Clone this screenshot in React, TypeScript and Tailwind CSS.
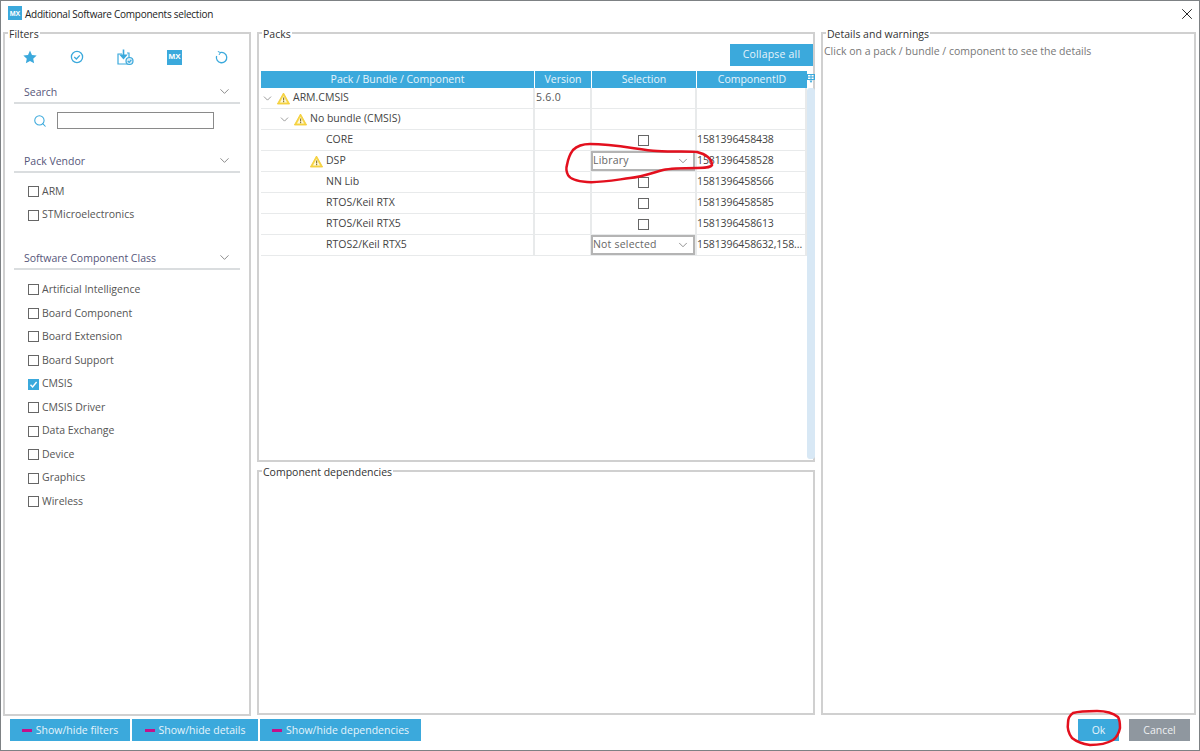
import React from 'react';
import { ChevronDown, Search, X } from 'lucide-react';

const vendors = ['ARM', 'STMicroelectronics'];
const classes = [
  'Artificial Intelligence',
  'Board Component',
  'Board Extension',
  'Board Support',
  'CMSIS',
  'CMSIS Driver',
  'Data Exchange',
  'Device',
  'Graphics',
  'Wireless',
];

type Row = {
  name: string;
  indent: number;
  warn?: boolean;
  expand?: boolean;
  version?: string;
  select?: string;
  check?: boolean;
  id?: string;
};

const rows: Row[] = [
  { name: 'ARM.CMSIS', indent: 0, warn: true, expand: true, version: '5.6.0' },
  { name: 'No bundle (CMSIS)', indent: 17, warn: true, expand: true },
  { name: 'CORE', indent: 54, check: true, id: '1581396458438' },
  { name: 'DSP', indent: 54, warn: true, select: 'Library', id: '1581396458528' },
  { name: 'NN Lib', indent: 54, check: true, id: '1581396458566' },
  { name: 'RTOS/Keil RTX', indent: 54, check: true, id: '1581396458585' },
  { name: 'RTOS/Keil RTX5', indent: 54, check: true, id: '1581396458613' },
  { name: 'RTOS2/Keil RTX5', indent: 54, select: 'Not selected', id: '1581396458632,158...' },
];

const WarnIcon = () => (
  <svg width="13" height="13" viewBox="0 0 13 13" className="shrink-0">
    <path d="M6.5 1 L12.6 12 L0.4 12 Z" fill="#f7d84b" stroke="#f2c92e" strokeWidth="0.8" strokeLinejoin="round" />
    <path d="M6.5 4 L10 10.6 L3 10.6 Z" fill="#fff8dc" />
    <rect x="6" y="5.5" width="1.2" height="3" fill="#8a7a3a" />
    <rect x="6" y="9" width="1.2" height="1.2" fill="#8a7a3a" />
  </svg>
);

const MxLogo = ({ size, text }: { size: string; text: string }) => (
  <div className={`${size} ${text} shrink-0 bg-[#3ba9dc] text-white font-bold flex items-center justify-center leading-none font-['Liberation_Sans',sans-serif]`}>
    MX
  </div>
);

const CheckItem = ({ label, checked }: { label: string; checked?: boolean }) => (
  <div className="h-[23.55px] flex items-center pl-[23px] text-[#555]">
    {checked ? (
      <div className="w-[11px] h-[11px] bg-[#3ba9dc] flex items-center justify-center mr-[3px]">
        <svg width="9" height="9" viewBox="0 0 9 9">
          <path d="M1.5 4.8 L3.6 7 L7.6 2" fill="none" stroke="#fff" strokeWidth="1.4" />
        </svg>
      </div>
    ) : (
      <div className="w-[11px] h-[11px] border border-[#666] mr-[3px]" />
    )}
    {label}
  </div>
);

const SectionHead = ({ title, className }: { title: string; className: string }) => (
  <div className={`${className} mx-[9px] h-[21px] border-b-2 border-[#dadddf] flex items-center justify-between pl-[10px] pr-[8px] text-[#56567a]`}>
    <span>{title}</span>
    <ChevronDown size={15} strokeWidth={1.2} className="text-[#666] -mt-[3px]" />
  </div>
);

const Panel = ({ title, className, children }: { title: string; className: string; children?: React.ReactNode }) => (
  <fieldset className={`${className} min-w-0 border-2 border-[#d0d0d0]`}>
    <legend className="ml-[3px] px-[1px] h-[16px] leading-[18px] text-[#333]">{title}</legend>
    {children}
  </fieldset>
);

const BarButton = ({ label, className }: { label: string; className: string }) => (
  <button className={`${className} h-[22px] pt-[1px] bg-[#3ba9dc] text-[#e6f4fb] whitespace-nowrap flex items-center justify-center gap-[4px]`}>
    <span className="w-[10px] h-[3px] bg-[#c4118a]" />
    {label}
  </button>
);

const Cell = ({ className, children }: { className?: string; children?: React.ReactNode }) => (
  <div className={`${className ?? ''} h-[21px] border-b border-r-2 border-[#e8eaeb] flex items-center min-w-0`}>{children}</div>
);

const Combo = ({ value }: { value: string }) => (
  <div className="w-[104px] mr-[1px] shrink-0 h-[20px] border-2 border-[#b4b4b4] flex items-center justify-between pr-[3px] text-[#666] tracking-[0.2px]">
    {value}
    <ChevronDown size={14} strokeWidth={1.2} className="text-[#666]" />
  </div>
);

export default function App() {
  return (
    <div className="relative w-[1200px] h-[751px] bg-white border border-[#7d8184] overflow-hidden text-[10.5px] font-['Open_Sans','Liberation_Sans',sans-serif]">
      {/* Title bar */}
      <div className="h-[24px] flex items-center pl-[7px] pr-[3px] text-[#222]">
        <MxLogo size="w-[14px] h-[14px]" text="text-[7px]" />
        <span className="ml-[3px] mt-[2px] text-[10px] tracking-[-0.25px]">Additional Software Components selection</span>
        <X size={18} strokeWidth={1.3} className="ml-auto mt-[2px] text-[#222]" />
      </div>

      {/* Panels */}
      <div className="flex h-[691px] gap-[6px] pl-[2px]">
        <Panel title="Filters" className="w-[248px] h-[691px]">
          <div className="flex items-center justify-between h-[20px] mt-[6px] pl-[18px] pr-[21px] text-[#3ba9dc]">
            <svg width="14" height="14" viewBox="0 0 24 24" fill="#3ba9dc">
              <path d="M12 1 L15.4 8.4 L23.4 9.3 L17.5 14.8 L19.1 22.8 L12 18.8 L4.9 22.8 L6.5 14.8 L0.6 9.3 L8.6 8.4 Z" />
            </svg>
            <svg width="14" height="14" viewBox="0 0 14 14" fill="none" stroke="#3ba9dc" strokeWidth="1.3">
              <circle cx="7" cy="7" r="5.6" />
              <path d="M4.2 7 L6.4 9 L9.8 5.4" />
            </svg>
            <svg width="17" height="17" viewBox="0 0 17 17" fill="none" stroke="#3ba9dc" strokeWidth="1.2">
              <path d="M5 5 H1 V15 H12" />
              <path d="M10 4 H12 V8" />
              <path d="M6.5 0.5 V8.5" strokeWidth="1.6" />
              <path d="M3.5 6 L6.5 9.5 L9.5 6 Z" fill="#3ba9dc" />
              <circle cx="12.5" cy="12" r="3.5" fill="#d5ecf7" />
              <path d="M10.8 12 L12.2 13.4 L14.3 10.8" />
            </svg>
            <MxLogo size="w-[15px] h-[15px]" text="text-[8px]" />
            <svg width="13" height="13" viewBox="0 0 13 13" fill="none" stroke="#3ba9dc" strokeWidth="1.3">
              <path d="M5 1.6 A5.2 5.2 0 1 1 1.6 5" />
              <path d="M2.8 0.4 L5.4 1.6 L4 4" strokeWidth="1" />
            </svg>
          </div>

          <SectionHead title="Search" className="mt-[16px]" />
          <div className="flex items-center mt-[8px] h-[17px]">
            <Search size={14} strokeWidth={1.8} className="ml-[28px] text-[#3ba9dc]" />
            <div className="ml-[10px] w-[157px] h-[17px] border border-[#8a8a8a]" />
          </div>

          <SectionHead title="Pack Vendor" className="mt-[23px]" />
          <div className="mt-[7px]">
            {vendors.map((v) => (
              <CheckItem key={v} label={v} />
            ))}
          </div>

          <SectionHead title="Software Component Class" className="mt-[22px]" />
          <div className="mt-[8px]">
            {classes.map((c) => (
              <CheckItem key={c} label={c} checked={c === 'CMSIS'} />
            ))}
          </div>
        </Panel>

        <div className="w-[558px] flex flex-col gap-[1px]">
          <Panel title="Packs" className="h-[437px]">
            <div className="flex justify-end mt-[3px]">
              <button className="w-[83px] h-[22px] bg-[#3ba9dc] text-[#e6f4fb] tracking-[0.2px]">Collapse all</button>
            </div>
            <div className="flex mt-[5px] pl-[2px]">
              <div className="w-[546px]">
                <div className="grid grid-cols-[274px_57px_105px_110px] h-[17px] text-[#e6f4fb] text-center leading-[16px]">
                  <div className="bg-[#3ba9dc] mr-[1px]">Pack / Bundle / Component</div>
                  <div className="bg-[#3ba9dc] mr-[1px]">Version</div>
                  <div className="bg-[#3ba9dc] mr-[1px]">Selection</div>
                  <div className="bg-[#3ba9dc]">ComponentID</div>
                </div>
                {rows.map((r) => (
                  <div key={r.name} className="grid grid-cols-[274px_57px_105px_110px] text-[#444]">
                    <Cell>
                      <div className="relative flex items-center h-full" style={{ paddingLeft: r.indent }}>
                        {r.expand && <ChevronDown size={13} strokeWidth={1.2} className="text-[#666] mr-[3px]" />}
                        {r.warn && !r.expand && <span className="absolute left-[49px]"><WarnIcon /></span>}
                        {r.warn && r.expand && <WarnIcon />}
                        <span className={r.expand ? 'ml-[3px]' : 'ml-[11px]'}>{r.name}</span>
                      </div>
                    </Cell>
                    <Cell className="pl-[1px] text-[#555] tracking-[0.3px]">{r.version}</Cell>
                    <Cell className="justify-center">
                      {r.check && <div className="w-[11px] h-[11px] border border-[#666]" />}
                      {r.select && <Combo value={r.select} />}
                    </Cell>
                    <Cell className="whitespace-nowrap tracking-[-0.1px] border-r-0">{r.id}</Cell>
                  </div>
                ))}
              </div>
              <div className="w-[8px] flex flex-col">
                <svg width="8" height="10" viewBox="0 0 8 10" className="mt-[3px] mb-[4px]" fill="none" stroke="#3ba9dc">
                  <rect x="0.5" y="0.5" width="7" height="5" />
                  <path d="M0.5 3 H7.5 M4 0.5 V5.5" />
                  <path d="M2.5 6.5 L5.5 6.5 L4 9 Z" fill="#3ba9dc" stroke="none" />
                </svg>
                <div className="h-[371px] bg-[#d8e8f5] rounded-[3px]" />
              </div>
            </div>
          </Panel>
          <Panel title="Component dependencies" className="h-[252px]" />
        </div>

        <Panel title="Details and warnings" className="w-[375px] h-[690px]">
          <div className="pl-[1px] mt-[3px] text-[#777]">Click on a pack / bundle / component to see the details</div>
        </Panel>
      </div>

      {/* Bottom bar */}
      <div className="flex items-center mt-[3px] pl-[9px] pr-[9px] gap-[2px]">
        <BarButton label="Show/hide filters" className="w-[120px]" />
        <BarButton label="Show/hide details" className="w-[126px]" />
        <BarButton label="Show/hide dependencies" className="w-[161px]" />
        <button className="ml-auto w-[41px] h-[22px] pt-[1px] bg-[#3ba9dc] text-[#e6f4fb]">Ok</button>
        <button className="ml-[8px] w-[61px] h-[22px] pt-[1px] bg-[#8f979f] text-[#eef0f2]">Cancel</button>
      </div>

      {/* Red marker annotations drawn over the screenshot */}
      <svg width="1200" height="751" className="absolute -left-px -top-px pointer-events-none" fill="none" stroke="#e3101e" strokeWidth="2.5">
        <path d="M590 144 C615 144 640 150 657 151 C675 152 690 151 697 152 C706 154 712 159 712 165 C710 168 704 168 697 168 C685 168 672 168 663 170 C652 173 642 177 630 178 C615 180 600 183 587 182 C576 181 570 179 568 175 C566 171 566 168 567 165 C568 159 570 154 573 150 C577 146 584 144 590 144 Z" />
        <path d="M1068 723 C1068 718 1070 715 1073 713 C1080 711 1088 711 1097 711 C1105 711 1113 713 1118 717 C1120 720 1120 724 1120 728 C1119 733 1117 737 1113 740 C1106 744 1098 745 1090 745 C1083 744 1077 742 1072 738 C1069 734 1067 729 1068 723 Z" />
      </svg>
    </div>
  );
}
